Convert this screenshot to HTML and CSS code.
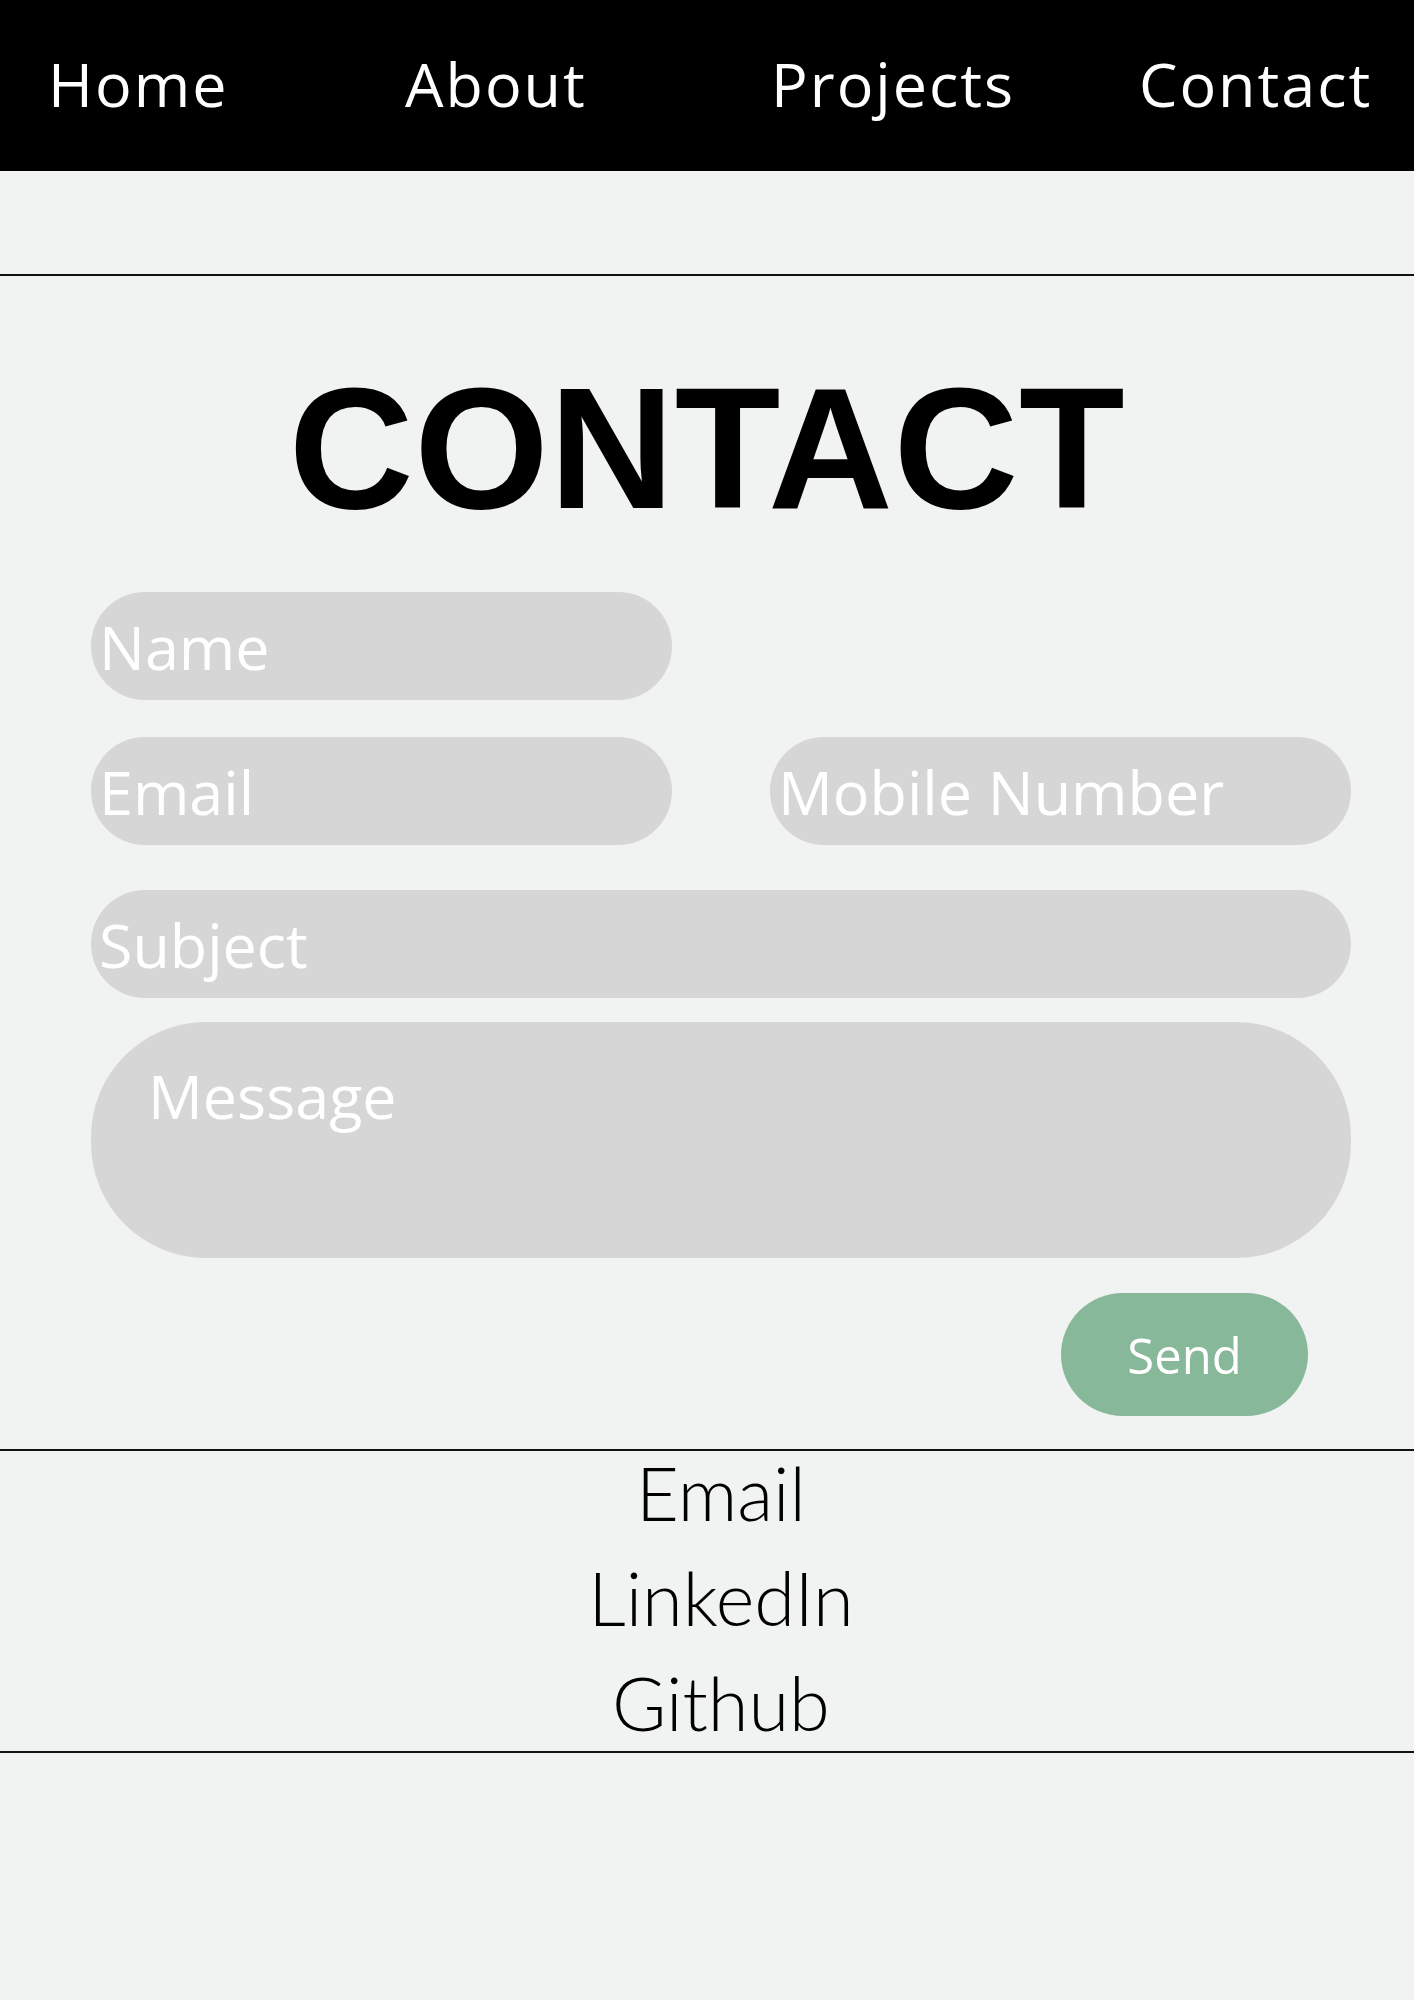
FILE: index.html
```html
<!DOCTYPE html>
<html lang="en">
<head>
<meta charset="utf-8">
<title>Contact</title>
<link rel="stylesheet" href="styles.css">
</head>
<body>
<nav class="nav">
  <a class="nav-link" href="#">Home</a>
  <a class="nav-link" href="#">About</a>
  <a class="nav-link" href="#">Projects</a>
  <a class="nav-link" href="#">Contact</a>
</nav>
<div class="spacer"></div>
<section class="contact">
  <h1 class="title">CONTACT</h1>
  <form class="form">
    <input class="field field-name" type="text" placeholder="Name">
    <div class="row">
      <input class="field" type="email" placeholder="Email">
      <input class="field" type="tel" placeholder="Mobile Number">
    </div>
    <input class="field field-subject" type="text" placeholder="Subject">
    <textarea class="message" placeholder="Message"></textarea>
    <div class="actions">
      <button class="send" type="button">Send</button>
    </div>
  </form>
</section>
<footer class="links">
  <a class="link" href="#">Email</a>
  <a class="link" href="#">LinkedIn</a>
  <a class="link" href="#">Github</a>
</footer>
</body>
</html>
```
FILE: styles.css
```css
* { box-sizing: border-box; }

body {
  margin: 0;
  background: #f1f3f2;
  font-family: "Open Sans", "Noto Sans", sans-serif;
}

.nav {
  height: 171px;
  background: #000;
  display: grid;
  grid-template-columns: 357px 366px 368px auto;
  align-items: center;
  padding-left: 48px;
}

.nav-link {
  color: #fff;
  text-decoration: none;
  font-size: 61px;
  line-height: 1;
  letter-spacing: 2px;
  position: relative;
  top: -2px;
}

.spacer { height: 103px; }

.contact {
  border-top: 2px solid #111;
  padding: 86px 0 33px;
}

.title {
  margin: 0;
  text-align: center;
  font-family: "Liberation Sans", Arial, sans-serif;
  font-weight: 700;
  font-size: 173px;
  line-height: 1;
  letter-spacing: 0.5px;
  color: #000;
}

.form {
  width: 1260px;
  margin: 57px 0 0 91px;
  display: flex;
  flex-direction: column;
}

.field {
  width: 581px;
  height: 108px;
  border: none;
  border-radius: 54px;
  background: #d6d6d6;
  padding: 0 8px;
  font-family: "Open Sans", "Noto Sans", sans-serif;
  font-size: 61px;
  color: #fff;
  outline: none;
}

.field::placeholder,
.message::placeholder { color: #fff; opacity: 1; }

.row {
  display: flex;
  justify-content: space-between;
  margin-top: 37px;
}

.field-subject {
  width: 1260px;
  margin-top: 45px;
}

.message {
  width: 1260px;
  height: 236px;
  margin-top: 24px;
  border: none;
  border-radius: 115px;
  background: #d6d6d6;
  padding: 32px 57px 0;
  font-family: "Open Sans", "Noto Sans", sans-serif;
  font-size: 61px;
  color: #fff;
  resize: none;
  outline: none;
  display: block;
}

.actions {
  display: flex;
  justify-content: flex-end;
  padding-right: 43px;
  margin-top: 35px;
}

.send {
  width: 247px;
  height: 123px;
  border: none;
  border-radius: 62px;
  background: #88b89a;
  color: #fff;
  font-family: "Open Sans", "Noto Sans", sans-serif;
  font-size: 49px;
  padding: 0;
  cursor: pointer;
}

.links {
  border-top: 2px solid #111;
  border-bottom: 2px solid #111;
  display: flex;
  flex-direction: column;
  align-items: center;
  gap: 31px;
  padding: 5px 0 11px 28px;
}

.link {
  font-family: "Lato", "Liberation Sans", sans-serif;
  font-weight: 300;
  font-size: 74px;
  line-height: 74px;
  color: #000;
  text-decoration: none;
}
```
